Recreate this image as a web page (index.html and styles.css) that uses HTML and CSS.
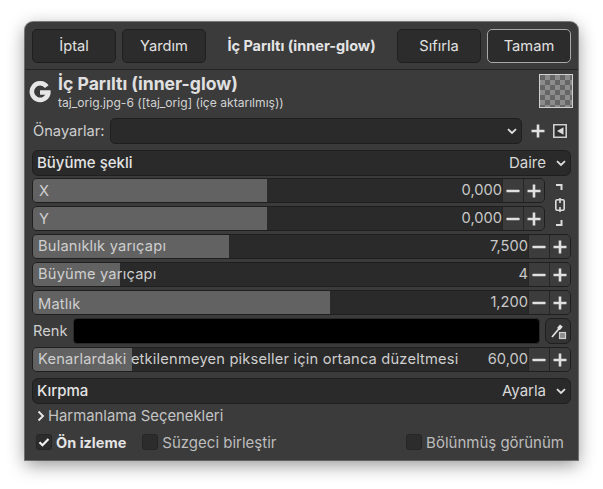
FILE: index.html
```html
<!DOCTYPE html>
<html lang="tr">
<head>
<meta charset="utf-8">
<title>İç Parıltı</title>
<link rel="stylesheet" href="styles.css">
</head>
<body>
<svg class="defs" width="0" height="0" aria-hidden="true">
  <symbol id="minus" viewBox="0 0 16 16"><rect x="1.500" y="6.700" width="13" height="2.600" rx=".6" fill="currentColor"/></symbol>
  <symbol id="plus" viewBox="0 0 16 16"><path d="M6.700 1.500h2.600v5.200h5.200v2.600H9.300v5.200H6.700V9.300H1.500V6.700h5.200z" fill="currentColor"/></symbol>
  <symbol id="chev" viewBox="0 0 12 12"><path d="M2 4.200l4 3.800 4-3.800" fill="none" stroke="currentColor" stroke-width="1.800"/></symbol>
</svg>
<main class="window">
  <header class="head">
    <button class="btn">İptal</button>
    <button class="btn">Yardım</button>
    <h1 class="head-title">İç Parıltı (inner-glow)</h1>
    <button class="btn">Sıfırla</button>
    <button class="btn btn-ok">Tamam</button>
  </header>
  <div class="body">
    <section class="info">
      <svg class="g-icon" viewBox="0 0 22 22"><path d="M17.800 5.600A8.300 8.300 0 1 0 19.300 12.200V11.500H11" fill="none" stroke="#e6e6e6" stroke-width="4.600"/></svg>
      <div class="info-text">
        <div class="info-title">İç Parıltı (inner-glow)</div>
        <div class="info-sub">taj_orig.jpg-6 ([taj_orig] (içe aktarılmış))</div>
      </div>
      <div class="checker"></div>
    </section>
    <div class="presets">
      <span class="lbl">Önayarlar:</span>
      <div class="preset-combo"><svg class="chev"><use href="#chev"/></svg></div>
      <svg class="p-plus"><use href="#plus"/></svg>
      <svg class="p-tri" viewBox="0 0 14 14"><path d="M.8.800h12.400v12.400H.8z" fill="#2f2f2f" stroke="#cfcfcf" stroke-width="1.600"/><path d="M10.500 3.200v7.600L4 7z" fill="#dcdcdc"/></svg>
    </div>
    <div class="combo"><span class="combo-name">Büyüme şekli</span><span class="combo-val">Daire</span><svg class="chev"><use href="#chev"/></svg></div>
    <div class="linked">
      <div class="linked-rows">
        <div class="spin"><div class="fill fill-xy"></div><span class="spin-lbl spin-lbl-xy">X</span><span class="val">0,000</span><span class="sb"><svg><use href="#minus"/></svg></span><span class="sb"><svg><use href="#plus"/></svg></span></div>
        <div class="spin"><div class="fill fill-xy"></div><span class="spin-lbl spin-lbl-xy">Y</span><span class="val">0,000</span><span class="sb"><svg><use href="#minus"/></svg></span><span class="sb"><svg><use href="#plus"/></svg></span></div>
      </div>
      <svg class="chain" viewBox="0 0 12 48"><path d="M2 4h5.500v5M2 44h5.500v-5" fill="none" stroke="#dcdcdc" stroke-width="2"/><rect x="1.800" y="18.800" width="8.400" height="10.400" rx="1.500" fill="none" stroke="#dcdcdc" stroke-width="1.600"/><path d="M6 17v5M6 26v5" stroke="#dcdcdc" stroke-width="1.600"/></svg>
    </div>
    <div class="spin"><div class="fill fill-blur"></div><span class="spin-lbl">Bulanıklık yarıçapı</span><span class="val">7,500</span><span class="sb"><svg><use href="#minus"/></svg></span><span class="sb"><svg><use href="#plus"/></svg></span></div>
    <div class="spin"><div class="fill fill-grow"></div><span class="spin-lbl">Büyüme yarıçapı</span><span class="val">4</span><span class="sb"><svg><use href="#minus"/></svg></span><span class="sb"><svg><use href="#plus"/></svg></span></div>
    <div class="spin"><div class="fill fill-op"></div><span class="spin-lbl spin-lbl-low">Matlık</span><span class="val">1,200</span><span class="sb"><svg><use href="#minus"/></svg></span><span class="sb"><svg><use href="#plus"/></svg></span></div>
    <div class="color-row">
      <span class="lbl">Renk</span>
      <div class="swatch"></div>
      <button class="picker"><svg viewBox="0 0 18 18"><path d="M3 15l8-9.500" fill="none" stroke="#e4e4e4" stroke-width="1.700"/><path d="M11 2.500l2.800 2.300-3 3.400L8 5.900z" fill="#e4e4e4"/><rect x="10.500" y="10.500" width="6" height="6" fill="#8c8c8c" stroke="#d0d0d0" stroke-width="1.200"/></svg></button>
    </div>
    <div class="spin"><div class="fill fill-med"></div><span class="spin-lbl">Kenarlardaki etkilenmeyen pikseller için ortanca düzeltmesi</span><span class="val">60,00</span><span class="sb"><svg><use href="#minus"/></svg></span><span class="sb"><svg><use href="#plus"/></svg></span></div>
    <div class="combo combo-clip"><span class="combo-name">Kırpma</span><span class="combo-val">Ayarla</span><svg class="chev"><use href="#chev"/></svg></div>
    <div class="expander"><svg class="exp-arrow" viewBox="0 0 8 12"><path d="M1.500 1.500L6 6l-4.500 4.500" fill="none" stroke="#e6e6e6" stroke-width="1.900"/></svg><span>Harmanlama Seçenekleri</span></div>
    <footer class="foot">
      <label class="check check-on"><span class="box"><svg viewBox="0 0 14 14"><path d="M2.500 7.200l3 3 6-6.200" fill="none" stroke="#f0f0f0" stroke-width="2.300"/></svg></span><span>Ön izleme</span></label>
      <label class="check check-merge"><span class="box"></span><span>Süzgeci birleştir</span></label>
      <label class="check check-split"><span class="box"></span><span>Bölünmüş görünüm</span></label>
    </footer>
  </div>
</main>
</body>
</html>
```
FILE: styles.css
```css
* { box-sizing: border-box; }
html, body { margin: 0; height: 100%; }
body {
  background: #fff;
  padding: 22px 25px 0;
  font-family: Inter, "Liberation Sans", sans-serif;
  font-size: 14.670px;
  color: #d6d6d6;
  overflow: hidden;
}
.defs { position: absolute; }
.window {
  width: 553px;
  height: 438px;
  background: #3b3b3b;
  border-radius: 8px 8px 0 0;
  box-shadow: 0 5px 18px rgba(0,0,0,.42), 0 0 0 1px rgba(40,40,40,.55);
}
.head {
  height: 48px;
  padding: 7px 7px 6px;
  display: flex;
  align-items: stretch;
  gap: 6px;
  border-bottom: 1px solid #242424;
}
.btn {
  width: 84px;
  background: #2c2c2c;
  border: 1px solid #1f1f1f;
  border-radius: 5px;
  color: #e2e2e2;
  font: inherit;
  padding: 0 0 1px;
}
.btn-ok { border-color: #a8a8a8; }
.head-title {
  flex: 1;
  margin: 0;
  font-size: 14.500px;
  font-weight: 700;
  color: #e4e4e4;
  text-align: center;
  line-height: 33px;
}
.body { padding: 0 7px; }
.info {
  display: flex;
  height: 48px;
  padding-top: 4px;
}
.g-icon { width: 22px; height: 22px; margin: 7px 0 0 -3px; flex: none; }
.info-text { flex: 1; margin-left: 7px; }
.info-title { font-size: 17.600px; font-weight: 700; color: #e0e0e0; line-height: 20px; }
.info-sub { font-size: 12.100px; line-height: 15px; color: #d2d2d2; margin-top: 1px; }
.checker {
  width: 34px;
  height: 34px;
  margin-right: -2px;
  border: 1px solid #d0d0d0;
  background-color: #666;
  background-image: conic-gradient(#8c8c8c 25%, transparent 0 50%, #8c8c8c 0 75%, transparent 0);
  background-size: 10px 10px;
}
.presets {
  display: flex;
  align-items: center;
  height: 26px;
  margin-bottom: 6px;
}
.lbl { color: #cfcfcf; }
.presets .lbl { width: 78px; flex: none; padding-left: 1px; }
.preset-combo {
  flex: 1;
  height: 26px;
  background: #2a2a2a;
  border: 1px solid #1f1f1f;
  border-radius: 5px;
  display: flex;
  align-items: center;
  justify-content: flex-end;
  padding-right: 3px;
  color: #e0e0e0;
}
.chev { width: 12px; height: 12px; flex: none; color: #e0e0e0; }
.p-plus { width: 16px; height: 16px; margin-left: 8px; color: #e0e0e0; }
.p-tri { width: 14px; height: 14px; margin: 0 4px 0 7px; }
.combo {
  height: 26px;
  background: #2a2a2a;
  border: 1px solid #1f1f1f;
  border-radius: 6px;
  display: flex;
  align-items: center;
  padding: 0 3px 0 4px;
  margin-bottom: 2px;
  color: #e4e4e4;
  font-size: 15px;
}
.combo-name { flex: 1; font-weight: 500; padding-bottom: 2px; }
.combo-val { margin-right: 9px; color: #d8d8d8; padding-bottom: 2px; }
.combo-clip { margin: 6px 0 0; }
.spin {
  position: relative;
  height: 25px;
  background: #2a2a2a;
  border: 1px solid #1f1f1f;
  border-radius: 5px;
  margin-bottom: 3px;
  display: flex;
  align-items: center;
  overflow: hidden;
}
.fill { position: absolute; left: 0; top: 0; bottom: 0; background: #626262; }
.fill-xy { width: 234px; }
.fill-blur { width: 196px; }
.fill-grow { width: 87px; }
.fill-op { width: 297px; }
.fill-med { width: 99px; }
.spin-lbl { position: relative; flex: 1; padding: 0 0 2px 5px; letter-spacing: .19px; color: #cfcfcf; white-space: nowrap; }
.spin-lbl-xy { padding: 1px 0 0 6px; }
.spin-lbl-low { padding: 2px 0 0 5px; }
.val { position: relative; color: #c8c8c8; padding-bottom: 2px; }
.sb {
  position: relative;
  flex: none;
  width: 21px;
  height: 100%;
  background: #3c3c3c;
  border-left: 1px solid #262626;
  display: flex;
  align-items: center;
  justify-content: center;
  color: #e0e0e0;
}
.sb svg { width: 16px; height: 16px; }
.linked { display: flex; }
.linked-rows { width: 513px; flex: none; }
.chain { width: 12px; height: 48px; margin: 3px 0 0 9px; flex: none; }
.color-row {
  display: flex;
  align-items: center;
  height: 26px;
  margin-bottom: 3px;
}
.color-row .lbl { width: 41px; flex: none; padding-left: 1px; }
.swatch {
  flex: 1;
  height: 26px;
  background: #000;
  border: 1px solid #2a2a2a;
  border-radius: 4px;
}
.picker {
  width: 26px;
  height: 26px;
  margin-left: 5px;
  padding: 3px;
  background: #333;
  border: 1px solid #1f1f1f;
  border-radius: 6px;
  display: flex;
  align-items: center;
  justify-content: center;
}
.picker svg { width: 18px; height: 18px; flex: none; }
.expander {
  display: flex;
  align-items: center;
  height: 24px;
  padding-left: 5px;
  color: #c4c4c4;
  font-size: 14.850px;
}
.exp-arrow { width: 8px; height: 12px; margin-right: 3px; }
.foot {
  display: flex;
  align-items: center;
  height: 28px;
  padding-left: 4px;
  font-size: 15px;
}
.check { display: flex; align-items: center; gap: 4px; color: #bdbdbd; }
.check-on { color: #e4e4e4; font-weight: 700; font-size: 14.500px; }
.check-merge { margin-left: 16px; }
.check-split { margin-left: auto; margin-right: 7px; }
.box {
  width: 16px;
  height: 16px;
  flex: none;
  background: #2c2c2c;
  border: 1px solid #262626;
  border-radius: 3px;
  display: flex;
}
.box svg { width: 14px; height: 14px; }
```
